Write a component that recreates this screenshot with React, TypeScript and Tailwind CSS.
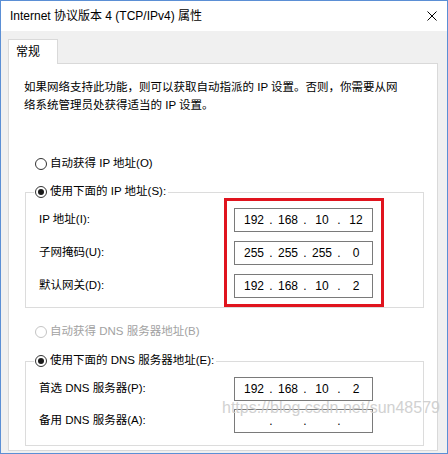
import React from 'react';

const FONT = 'font-[Liberation_Sans,Noto_Sans_CJK_SC,sans-serif]';

function Radio({ checked, disabled }: { checked?: boolean; disabled?: boolean }) {
  return (
    <span
      className={`flex h-[12px] w-[12px] shrink-0 items-center justify-center rounded-full border bg-white ${
        disabled ? 'border-[#c4c4c4]' : 'border-[#333333]'
      }`}
    >
      {checked && <span className="h-[6px] w-[6px] rounded-full bg-[#1a1a1a]" />}
    </span>
  );
}

function RadioLabel({
  label,
  checked,
  disabled,
}: {
  label: string;
  checked?: boolean;
  disabled?: boolean;
}) {
  return (
    <span className="flex h-[18px] items-center gap-[3px]">
      <Radio checked={checked} disabled={disabled} />
      <span className={disabled ? 'text-[#a2a2a2]' : 'text-black'}>{label}</span>
    </span>
  );
}

function IpBox({ parts }: { parts: string[] }) {
  return (
    <div className="flex h-[24px] w-[139px] items-center border border-[#7a7a7a] bg-white pl-[5px] text-[12px] leading-[12px] text-black">
      {parts.map((p, i) => (
        <React.Fragment key={i}>
          {i > 0 && <span className="w-[6px] text-center">.</span>}
          <span className="w-[28px] text-center">{p}</span>
        </React.Fragment>
      ))}
    </div>
  );
}

const IP_ROWS = [
  { label: 'IP 地址(I):', parts: ['192', '168', '10', '12'] },
  { label: '子网掩码(U):', parts: ['255', '255', '255', '0'] },
  { label: '默认网关(D):', parts: ['192', '168', '10', '2'] },
];

const DNS_ROWS = [
  { label: '首选 DNS 服务器(P):', parts: ['192', '168', '10', '2'] },
  { label: '备用 DNS 服务器(A):', parts: ['', '', '', ''] },
];

export default function App() {
  return (
    <div
      className={`relative flex h-[454px] w-[448px] flex-col overflow-hidden border border-[#5b8fd5] bg-[#f0f0f0] text-black ${FONT}`}
    >
      {/* Title bar */}
      <div className="flex h-[30px] shrink-0 items-center justify-between bg-white pl-[9px] pr-[10px] text-[12px]">
        <span>Internet 协议版本 4 (TCP/IPv4) 属性</span>
        <svg width="10" height="10" viewBox="0 0 10 10" className="text-black">
          <path d="M0.5 0.5 L9.5 9.5 M9.5 0.5 L0.5 9.5" stroke="currentColor" strokeWidth="1" />
        </svg>
      </div>

      <div className="flex flex-1 flex-col pb-[2px] pl-[7px] pt-[8px]">
        {/* Tab */}
        <div className="relative z-10 -mb-px flex h-[25px] w-[50px] items-center border border-b-0 border-[#d9d9d9] bg-white pl-[7px] text-[12px]">
          常规
        </div>

        {/* Panel */}
        <div className="flex w-[430px] flex-1 flex-col border border-[#d9d9d9] bg-white text-[11.5px]">
          <p className="ml-[15px] mt-[14px] leading-[18px]">
            如果网络支持此功能，则可以获取自动指派的 IP 设置。否则，你需要从网
            <br />
            络系统管理员处获得适当的 IP 设置。
          </p>

          <div className="ml-[26px] mt-[41px]">
            <RadioLabel label="自动获得 IP 地址(O)" />
          </div>

          <fieldset className="ml-[16px] mt-[10px] w-[399px] border border-[#dcdcdc]">
            <legend className="ml-[8px] pl-[1px] pr-[2px]">
              <RadioLabel label="使用下面的 IP 地址(S):" checked />
            </legend>
            <div className="flex">
              <div className="flex w-[198px] flex-col gap-[9px] pl-[13px] pt-[7px]">
                {IP_ROWS.map((r) => (
                  <div key={r.label} className="flex h-[24px] items-center">
                    {r.label}
                  </div>
                ))}
              </div>
              <div className="-mt-[3px] flex flex-col gap-[9px] border-[3px] border-[#e0141e] pb-[6px] pl-[7px] pr-[8px] pt-[7px]">
                {IP_ROWS.map((r) => (
                  <IpBox key={r.label} parts={r.parts} />
                ))}
              </div>
            </div>
          </fieldset>

          <div className="ml-[26px] mt-[15px]">
            <RadioLabel label="自动获得 DNS 服务器地址(B)" disabled />
          </div>

          <fieldset className="ml-[16px] mt-[11px] w-[399px] border border-[#dcdcdc] pb-[12px]">
            <legend className="ml-[8px] pl-[1px] pr-[2px]">
              <RadioLabel label="使用下面的 DNS 服务器地址(E):" checked />
            </legend>
            <div className="flex pt-[7px]">
              <div className="flex w-[208px] flex-col gap-[8px] pl-[13px]">
                {DNS_ROWS.map((r) => (
                  <div key={r.label} className="flex h-[24px] items-center">
                    {r.label}
                  </div>
                ))}
              </div>
              <div className="flex flex-col gap-[8px]">
                {DNS_ROWS.map((r) => (
                  <IpBox key={r.label} parts={r.parts} />
                ))}
              </div>
            </div>
          </fieldset>
        </div>
      </div>

      {/* Watermark */}
      <div className="pointer-events-none absolute left-[221px] top-[399px] font-[Liberation_Sans,sans-serif] text-[16px] leading-[16px] text-[#cdcdcd] opacity-90">
        https://blog.csdn.net/sun48579
      </div>
    </div>
  );
}
